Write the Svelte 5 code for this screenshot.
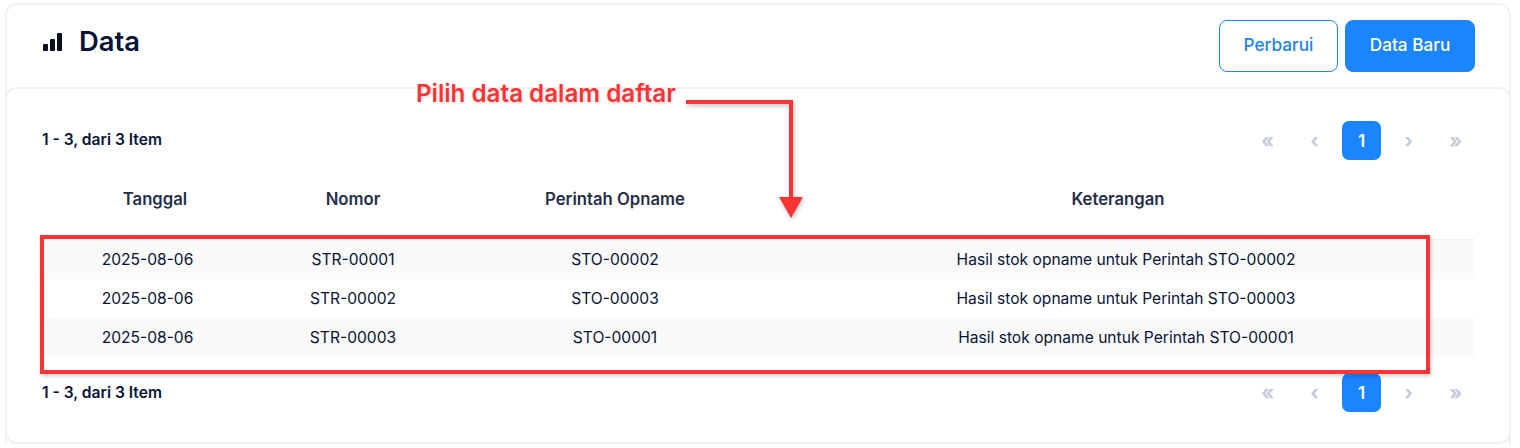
<script>
  const rows = [
    ['2025-08-06', 'STR-00001', 'STO-00002', 'Hasil stok opname untuk Perintah STO-00002'],
    ['2025-08-06', 'STR-00002', 'STO-00003', 'Hasil stok opname untuk Perintah STO-00003'],
    ['2025-08-06', 'STR-00003', 'STO-00001', 'Hasil stok opname untuk Perintah STO-00001']
  ];
</script>

{#snippet pager()}
  <div class="pager-row">
    <span class="count">1 - 3, dari 3 Item</span>
    <div class="pager">
      <span class="pg arrowbtn">«</span>
      <span class="pg arrowbtn">‹</span>
      <span class="pg active">1</span>
      <span class="pg arrowbtn">›</span>
      <span class="pg arrowbtn">»</span>
    </div>
  </div>
{/snippet}

<div class="page">
  <section class="card">
    <header class="head">
      <div class="title">
        <svg class="bars" viewBox="0 0 19 18" width="19" height="18"><rect x="0" y="11" width="5" height="7" rx="1"/><rect x="7" y="6" width="5" height="12" rx="1"/><rect x="14" y="0" width="5" height="18" rx="1"/></svg>
        <h1>Data</h1>
      </div>
      <div class="actions">
        <button class="btn outline">Perbarui</button>
        <button class="btn solid">Data Baru</button>
      </div>
    </header>
    <div class="body">
      {@render pager()}
      <table>
        <colgroup><col class="c1" /><col class="c2" /><col class="c3" /><col /></colgroup>
        <thead>
          <tr><th class="t1">Tanggal</th><th>Nomor</th><th>Perintah Opname</th><th class="t4">Keterangan</th></tr>
        </thead>
        <tbody>
          {#each rows as row}
            <tr>{#each row as cell}<td>{cell}</td>{/each}</tr>
          {/each}
        </tbody>
      </table>
      {@render pager()}
    </div>
  </section>

  <div class="note">Pilih data dalam daftar</div>
  <svg class="arrow" viewBox="0 0 130 125" width="130" height="125">
    <path d="M0 8H105V104" fill="none" stroke="#ff3333" stroke-width="4"/>
    <path d="M93 103H117L105 124Z" fill="#ff3333"/>
  </svg>
  <div class="frame"></div>
</div>

<style>
  :global(body) {
    margin: 0;
    background: #fff;
    font-family: Inter, "Liberation Sans", sans-serif;
  }
  .page {
    position: relative;
    width: 1520px;
    height: 448px;
    overflow: hidden;
    padding: 3px 9px 3px 5px;
    box-sizing: border-box;
  }
  .card {
    height: 441px;
    box-sizing: border-box;
    border: 2px solid #f1f1f4;
    border-radius: 12px;
    background: #fff;
    display: flex;
    flex-direction: column;
  }
  .head {
    height: 82px;
    box-sizing: border-box;
    flex: none;
    padding: 15px 34px 0 36px;
    display: flex;
    justify-content: space-between;
    align-items: flex-start;
  }
  .title {
    display: flex;
    align-items: center;
    gap: 17px;
    height: 42px;
  }
  .bars {
    margin-top: 2px;
  }
  .bars rect { fill: #0b1021; }
  h1 {
    margin: 0;
    font-size: 27.4px;
    font-weight: 600;
    color: #071437;
  }
  .actions {
    display: flex;
    gap: 7px;
  }
  .btn {
    height: 52px;
    border-radius: 8px;
    padding: 0 0 3px;
    font: 500 17.2px Inter, sans-serif;
    box-sizing: border-box;
  }
  .outline {
    width: 119px;
    background: #fff;
    border: 1px solid #1b84ff;
    color: #1b84ff;
  }
  .solid {
    width: 130px;
    background: #1b84ff;
    border: 1px solid #1b84ff;
    color: #fff;
  }
  .body {
    flex: 1;
    margin: 0 -2px -2px;
    border: 2px solid #f1f1f4;
    border-bottom: 0;
    border-radius: 12px 12px 0 0;
    padding: 32px 34px 0 35px;
  }
  .pager-row {
    display: flex;
    justify-content: space-between;
    align-items: center;
    height: 39px;
  }
  .count {
    font-size: 15.6px;
    line-height: 37px;
    height: 39px;
    font-weight: 600;
    color: #071437;
  }
  .pager-row:last-child .count {
    line-height: 39px;
  }
  .pager {
    display: flex;
    gap: 8px;
  }
  .pg {
    width: 39px;
    height: 39px;
    border-radius: 7px;
    display: flex;
    align-items: center;
    justify-content: center;
    font-size: 17px;
    font-weight: 600;
    color: #c4cada;
  }
  .arrowbtn {
    font-size: 20px;
    font-weight: 700;
  }
  .active {
    background: #1b84ff;
    color: #fff;
  }
  table {
    width: 100%;
    border-collapse: collapse;
    table-layout: fixed;
    margin-bottom: 16px;
  }
  .c1 { width: 211px; }
  .c2 { width: 200px; }
  .c3 { width: 324px; }
  th {
    height: 79px;
    padding: 0;
    box-sizing: border-box;
    font-size: 16.7px;
    font-weight: 600;
    color: #252f4a;
    border-bottom: 1px solid #f1f1f4;
    text-align: center;
  }
  .t1 { padding-left: 15px; }
  .t4 { padding-right: 16px; }
  td {
    height: 39px;
    padding: 0;
    font-size: 15.6px;
    color: #071437;
    text-align: center;
  }
  tbody tr:first-child td {
    height: 40px;
    box-sizing: border-box;
  }
  tbody tr:nth-child(odd) { background: #fafafa; }
  .note {
    position: absolute;
    left: 416px;
    top: 79px;
    font-size: 24.2px;
    font-weight: 600;
    color: #ff3333;
    text-shadow: 1px 2px 3px rgba(0, 0, 0, 0.12);
  }
  .arrow {
    position: absolute;
    left: 686px;
    top: 94px;
    filter: drop-shadow(1px 2px 2px rgba(0, 0, 0, 0.25));
  }
  .frame {
    position: absolute;
    left: 40px;
    top: 235px;
    width: 1390px;
    height: 139px;
    box-sizing: border-box;
    border: 4px solid #ff3333;
    box-shadow: 1px 2px 4px rgba(0, 0, 0, 0.2);
  }
</style>
